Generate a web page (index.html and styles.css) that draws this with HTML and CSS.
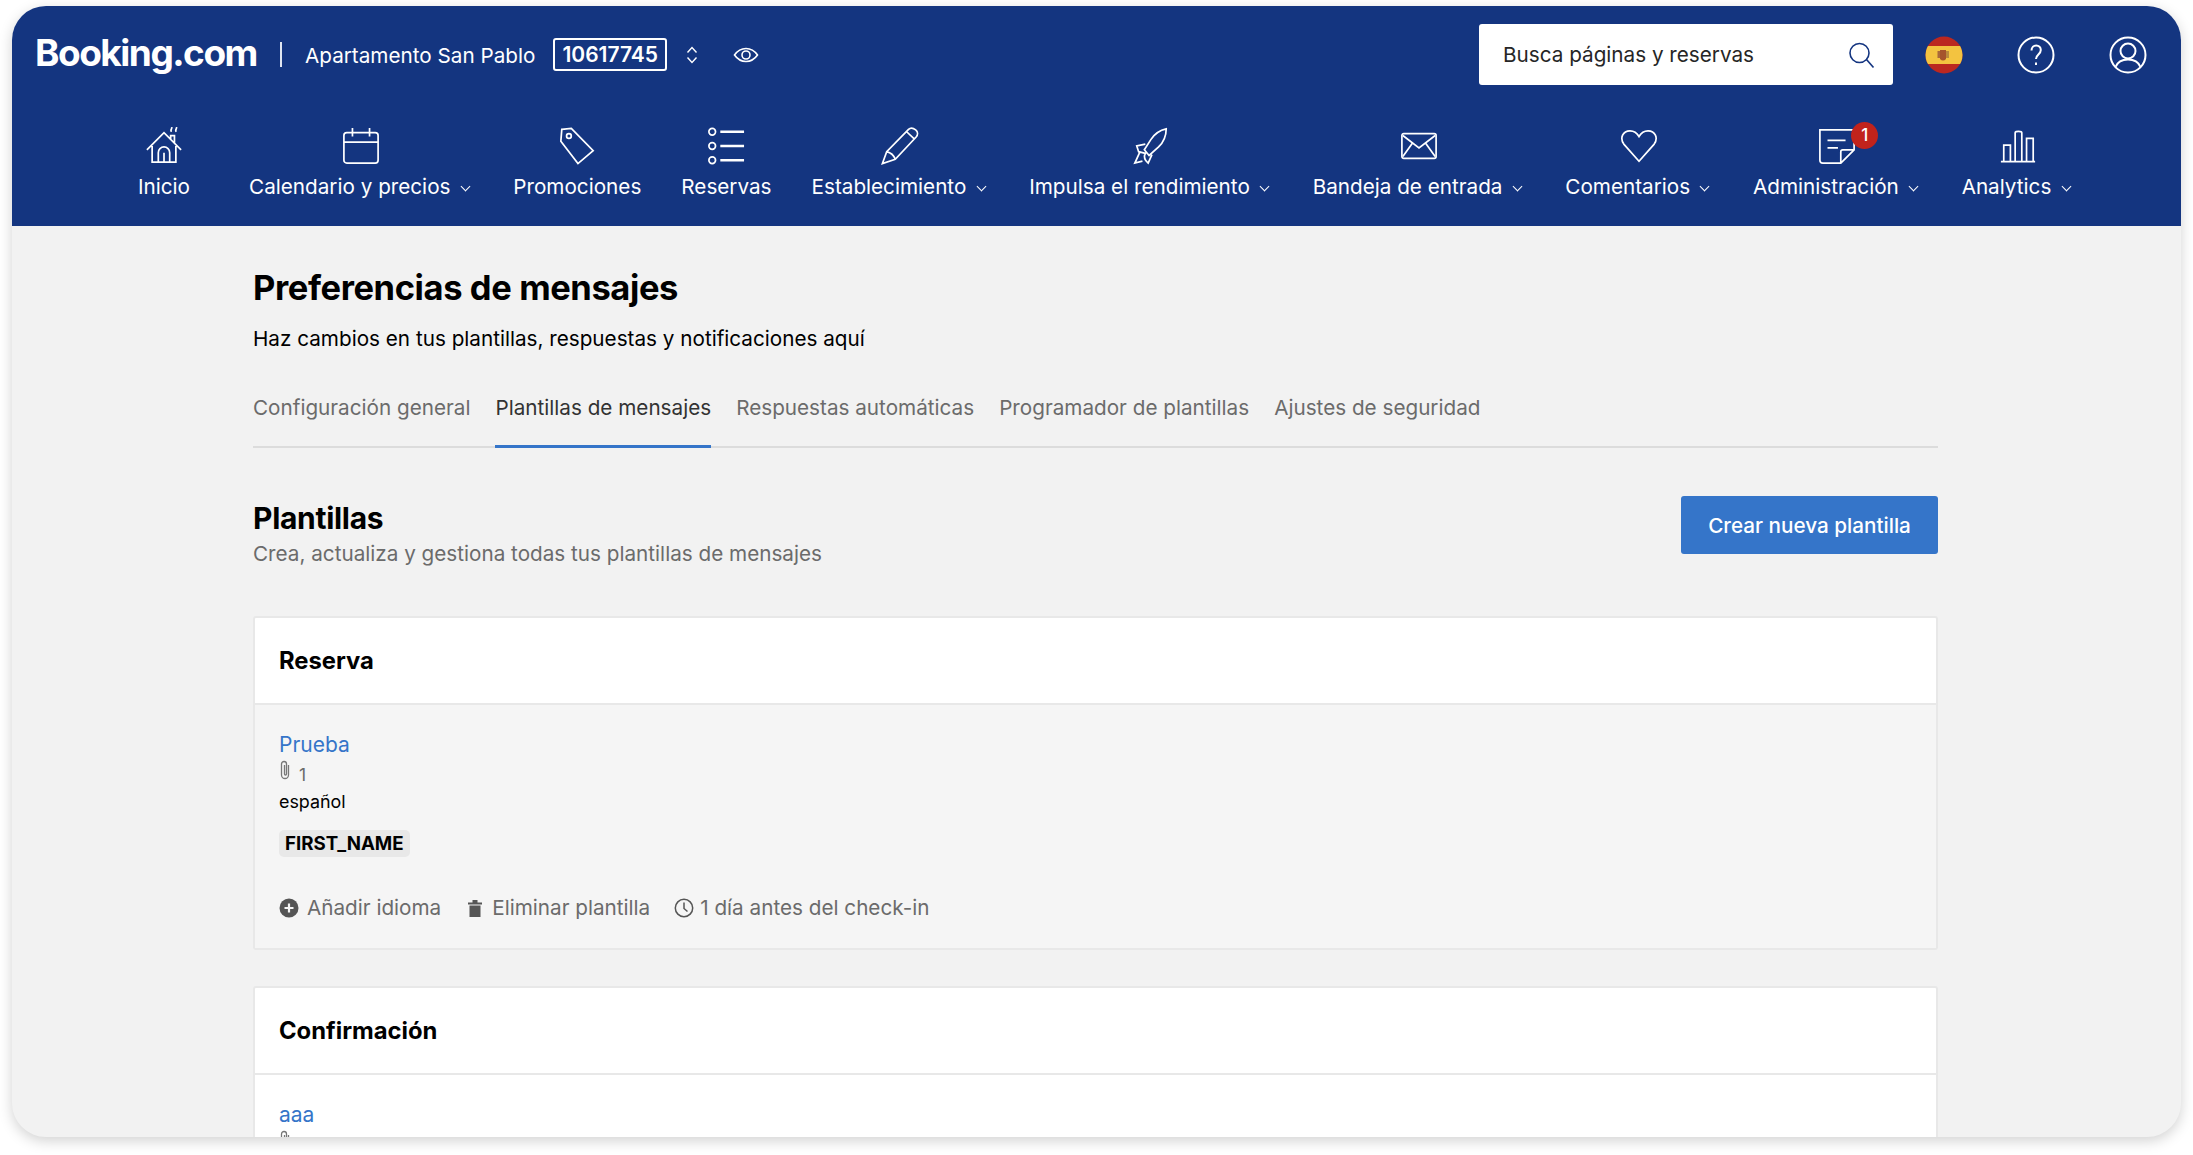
FILE: index.html
```html
<!DOCTYPE html>
<html lang="es">
<head>
    <meta charset="UTF-8">
    <meta name="viewport" content="width=device-width, initial-scale=1.0">
    <title>Preferencias de mensajes</title>
    <link rel="stylesheet" href="styles.css">
</head>
<body>
    <div class="window">
        <header class="header">
            <div class="top-row">
                <div class="brand">
                    <span class="logo">Booking.com</span>
                    <span class="brand-sep"></span>
                    <span class="hotel-name">Apartamento San Pablo</span>
                    <span class="hotel-id">10617745</span>
                    <svg class="updown" viewBox="0 0 14 20"><path d="M2.500 7.500 7 2.500l4.500 5M2.500 12.500 7 17.500l4.500-5"/></svg>
                    <svg class="eye" viewBox="0 0 26 20"><path d="M1.500 10C5 5 8.500 3.500 13 3.500S21 5 24.500 10C21 15 17.500 16.500 13 16.500S5 15 1.500 10Z"/><circle cx="13" cy="10" r="4"/></svg>
                </div>
                <div class="top-tools">
                    <div class="search">
                        <span>Busca páginas y reservas</span>
                        <svg viewBox="0 0 28 28"><circle cx="12.500" cy="12" r="9.500"/><path d="m19.500 18.500 7 8"/></svg>
                    </div>
                    <svg class="flag" viewBox="0 0 38 38">
                        <clipPath id="flag-clip"><circle cx="19" cy="19" r="18.500"/></clipPath>
                        <g clip-path="url(#flag-clip)">
                            <path d="M0 0h38v38H0z" fill="#bb2720"/>
                            <path d="M0 10h38v18H0z" fill="#f3c340"/>
                            <path d="M15 14h6v9q-3 3-6 0z" fill="#a5532c"/>
                            <path d="M21 15h3v7h-3z" fill="#b98a3c"/>
                            <path d="M12.500 15h2.500v7h-2.500z" fill="#a9683a"/>
                        </g>
                    </svg>
                    <svg class="round-icon" viewBox="0 0 38 38"><circle cx="19" cy="19" r="17.500"/><path d="M14.500 14.500c0-3 2-5 4.700-5s4.600 2 4.600 4.500c0 4.500-4.800 4.500-4.800 9"/><path d="M19 26.500v2.500"/></svg>
                    <svg class="round-icon" viewBox="0 0 38 38"><circle cx="19" cy="19" r="17.500"/><circle cx="19" cy="15" r="7.500"/><path d="M6.500 31c2-5 7-7.500 12.500-7.500S29.500 26 31.500 31"/></svg>
                </div>
            </div>
            <nav class="nav">
                <a class="nav-item home">
                    <svg viewBox="0 0 40 40"><path d="M2 24 20 6l18 18M7.500 20v17h25V20M14 37V27a6 6 0 0 1 12 0v10M20 37V27M27 13V9h4v8M28 5c-2-2 1-3 0-5M33 5c-2-2 1-3 0-5"/></svg>
                    <span>Inicio</span>
                </a>
                <a class="nav-item">
                    <svg viewBox="0 0 40 40"><rect x="2" y="6" width="36" height="32" rx="3"/><path d="M2 16h36M11 1v9M29 1v9"/></svg>
                    <span>Calendario y precios <i class="chev"></i></span>
                </a>
                <a class="nav-item">
                    <svg viewBox="0 0 40 40"><path d="M4 2.500 14 1.500 37 25 21 38.500 3 15z"/><circle cx="11.500" cy="9.500" r="2.500"/></svg>
                    <span>Promociones</span>
                </a>
                <a class="nav-item">
                    <svg viewBox="0 0 40 40"><circle cx="5.500" cy="5" r="3.500"/><circle cx="5.500" cy="20" r="3.500"/><circle cx="5.500" cy="35" r="3.500"/><path d="M14 5h25M14 20h25M14 35h25" class="thick"/></svg>
                    <span>Reservas</span>
                </a>
                <a class="nav-item">
                    <svg viewBox="0 0 40 40"><path d="M1.500 38.500 6 26 29 2.500c2-2 5-1.500 7.500.5s2.500 5 .5 7.500L15 34zM6 26c4 1 7.500 4 9 8M27 5l8 7.500"/></svg>
                    <span>Establecimiento <i class="chev"></i></span>
                </a>
                <a class="nav-item">
                    <svg viewBox="0 0 40 40"><path d="M36 2c-7 1.500-12 5-16 11L13 24l5 6 10-9c6-6 8-12 8-19zM14 18l-9 2 2 6 8 2M21 29l-4 9c-4-3-5-6-3-11M8 27l-5 11 8-2"/></svg>
                    <span>Impulsa el rendimiento <i class="chev"></i></span>
                </a>
                <a class="nav-item">
                    <svg viewBox="0 0 40 40"><rect x="2" y="7" width="36" height="26" rx="2"/><path d="m3 9 17 13L37 9M3 31l10-14M37 31 27 17"/></svg>
                    <span>Bandeja de entrada <i class="chev"></i></span>
                </a>
                <a class="nav-item">
                    <svg viewBox="0 0 40 40"><path d="M20 36 4 18C-.5 11.500 3 4 10.500 4 14.500 4 18 6.500 20 10c2-3.500 5.500-6 9.500-6C37 4 40.500 11.500 36 18z"/></svg>
                    <span>Comentarios <i class="chev"></i></span>
                </a>
                <a class="nav-item">
                    <span class="admin-icon">
                        <svg viewBox="0 0 40 40"><path d="M22 38H5c-2 0-3-1-3-3V3h34c1 0 2 1 2 2v19L24 38zM24 37V26q0-2 2-2h11M10 14h19M10 22h11"/></svg>
                        <b class="badge">1</b>
                    </span>
                    <span>Administración <i class="chev"></i></span>
                </a>
                <a class="nav-item">
                    <svg viewBox="0 0 40 40"><path d="M2 36.500h36M5 36V19h7v17M17 36V6c0-2 7-2 7 0v30M29 36V12h7v24"/></svg>
                    <span>Analytics <i class="chev"></i></span>
                </a>
            </nav>
        </header>

        <main class="content">
            <h1>Preferencias de mensajes</h1>
            <p class="intro">Haz cambios en tus plantillas, respuestas y notificaciones aquí</p>

            <div class="tabs">
                <a class="tab">Configuración general</a>
                <a class="tab active">Plantillas de mensajes</a>
                <a class="tab">Respuestas automáticas</a>
                <a class="tab">Programador de plantillas</a>
                <a class="tab">Ajustes de seguridad</a>
            </div>

            <div class="section-head">
                <div>
                    <h2>Plantillas</h2>
                    <p class="section-desc">Crea, actualiza y gestiona todas tus plantillas de mensajes</p>
                </div>
                <button class="primary">Crear nueva plantilla</button>
            </div>

            <section class="card">
                <h3 class="card-title">Reserva</h3>
                <div class="card-body shaded">
                    <a class="tpl-link">Prueba</a>
                    <div class="attach">
                        <svg viewBox="0 0 12 20"><path d="M9.500 5v10a3.500 3.500 0 0 1-7 0V4a2.500 2.500 0 0 1 5 0v10a1 1 0 0 1-2 0V5"/></svg>
                        <span>1</span>
                    </div>
                    <div class="lang">español</div>
                    <span class="tag">FIRST_NAME</span>
                    <div class="actions">
                        <span class="action">
                            <svg viewBox="0 0 20 20"><circle cx="10" cy="10" r="9.500" fill="#555"/><path d="M10 5.500v9M5.500 10h9" stroke="#f5f5f5" stroke-width="2.200"/></svg>
                            Añadir idioma
                        </span>
                        <span class="action">
                            <svg viewBox="0 0 20 20"><path d="M3 4.500h14V6.500H3zM7.500 4.500V2h5v2.500M4.500 7.500h11V19h-11z" fill="#555"/></svg>
                            Eliminar plantilla
                        </span>
                        <span class="action tight">
                            <svg viewBox="0 0 20 20"><circle cx="10" cy="10" r="8.700" fill="none" stroke="#555" stroke-width="1.500"/><path d="M10 4.500V10.500l3.500 3" fill="none" stroke="#555" stroke-width="1.500"/></svg>
                            1 día antes del check-in
                        </span>
                    </div>
                </div>
            </section>

            <section class="card">
                <h3 class="card-title">Confirmación</h3>
                <div class="card-body">
                    <a class="tpl-link">aaa</a>
                    <div class="attach">
                        <svg viewBox="0 0 12 20"><path d="M9.500 5v10a3.500 3.500 0 0 1-7 0V4a2.500 2.500 0 0 1 5 0v10a1 1 0 0 1-2 0V5"/></svg>
                        <span>1</span>
                    </div>
                </div>
            </section>
        </main>
    </div>
</body>
</html>
```

FILE: styles.css
```css
* {
    box-sizing: border-box;
}

body {
    margin: 0;
    padding: 6px 12px 0;
    height: 1155px;
    overflow: hidden;
    background-color: #fff;
    font-family: Inter, "Noto Sans", sans-serif;
    font-size: 20.7px;
    color: #000;
}

.window {
    height: 1131px;
    overflow: hidden;
    border-radius: 34px;
    background-color: #f2f2f2;
    box-shadow: 0 4px 14px rgba(0, 0, 0, 0.18);
}

/* Header */
.header {
    height: 220px;
    background-color: #143580;
    color: #fff;
}

.top-row {
    display: flex;
    justify-content: space-between;
    padding: 18px 34px 0 23px;
}

.brand {
    display: flex;
    align-items: center;
    height: 61px;
}

.logo {
    width: 222px;
    padding-bottom: 4px;
    font-size: 37px;
    font-weight: 700;
    letter-spacing: -1.5px;
}

.brand-sep {
    width: 2px;
    height: 25px;
    margin: 0 23px;
    background-color: #dfe5f1;
}

.hotel-name {
    margin-right: 18px;
    padding-top: 1px;
}

.hotel-id {
    padding: 2px 7px;
    border: 2px solid #fff;
    border-radius: 3px;
    font-size: 21px;
    font-weight: 600;
}

.updown {
    width: 14px;
    height: 20px;
    margin-left: 18px;
    fill: none;
    stroke: #fff;
    stroke-width: 1.4;
}

.eye {
    width: 26px;
    height: 20px;
    margin-left: 34px;
    fill: none;
    stroke: #fff;
    stroke-width: 1.6;
}

.top-tools {
    display: flex;
    align-items: center;
    gap: 54px;
}

.search {
    display: flex;
    align-items: center;
    justify-content: space-between;
    width: 414px;
    height: 61px;
    margin-right: -22px;
    padding: 0 18px 0 24px;
    border-radius: 3px;
    background-color: #fff;
    color: #262626;
}

.search svg {
    width: 28px;
    height: 28px;
    fill: none;
    stroke: #143580;
    stroke-width: 1.6;
}

.flag,
.round-icon {
    width: 38px;
    height: 38px;
}

.round-icon {
    fill: none;
    stroke: #fff;
    stroke-width: 2;
}

.nav {
    display: flex;
    gap: 40px;
    margin-top: 42px;
    padding-left: 126px;
}

.nav-item {
    display: flex;
    flex-direction: column;
    align-items: center;
    gap: 9px;
    white-space: nowrap;
}

.nav-item.home {
    margin-right: 19px;
}

.nav-item svg {
    display: block;
    width: 38px;
    height: 38px;
    fill: none;
    stroke: #fff;
    stroke-width: 1.8;
}

.nav-item .thick {
    stroke-width: 2.6;
}

.chev {
    display: inline-block;
    width: 7px;
    height: 7px;
    margin: 0 4.5px 4px 5.5px;
    border-right: 1.4px solid #fff;
    border-bottom: 1.4px solid #fff;
    transform: rotate(45deg);
}

.admin-icon {
    position: relative;
}

.badge {
    position: absolute;
    top: -5px;
    right: -22px;
    width: 27px;
    height: 27px;
    border-radius: 50%;
    background-color: #c1231c;
    font-size: 17px;
    font-weight: 500;
    line-height: 27px;
    text-align: center;
}

/* Contenido */
.content {
    width: 1685px;
    margin-left: 241px;
}

h1 {
    margin: 0;
    padding-top: 39px;
    font-size: 34.5px;
    font-weight: 700;
    line-height: 46px;
    letter-spacing: -0.4px;
}

.intro {
    margin: 14px 0 0;
    line-height: 27px;
}

.tabs {
    display: flex;
    gap: 25px;
    margin-top: 28px;
    border-bottom: 2px solid #dcdcdc;
}

.tab {
    height: 66px;
    padding-top: 15px;
    color: #6b6b6b;
    white-space: nowrap;
}

.tab.active {
    margin-bottom: -2px;
    height: 68px;
    border-bottom: 3px solid #3575c9;
    color: #333;
}

.section-head {
    display: flex;
    align-items: flex-start;
    justify-content: space-between;
    margin-top: 48px;
}

h2 {
    margin: 0;
    padding-top: 2px;
    font-size: 30px;
    font-weight: 700;
    line-height: 40px;
    letter-spacing: -0.3px;
}

.section-desc {
    margin: 2px 0 0;
    color: #6b6b6b;
    line-height: 27px;
}

.primary {
    width: 257px;
    height: 58px;
    border: none;
    border-radius: 3px;
    background-color: #3575c9;
    color: #fff;
    font-family: inherit;
    font-size: 20.7px;
    font-weight: 500;
}

.card {
    margin-bottom: 36px;
    border: 2px solid #e8e8e8;
    border-radius: 3px;
    background-color: #fff;
}

.section-head + .card {
    margin-top: 49px;
}

.card-title {
    margin: 0;
    padding: 1px 24px 0;
    border-bottom: 2px solid #e8e8e8;
    font-size: 23.8px;
    font-weight: 700;
    line-height: 84px;
}

.card-body {
    padding: 25px 24px 0;
}

.card-body.shaded {
    height: 243px;
    background-color: #f5f5f5;
}

.tpl-link {
    display: block;
    color: #3575c9;
    font-size: 21px;
    line-height: 30px;
}

.attach {
    display: flex;
    align-items: flex-start;
    gap: 8px;
    height: 28px;
    color: #6b6b6b;
    font-size: 17.5px;
}

.attach svg {
    width: 12px;
    height: 20px;
    fill: none;
    stroke: #777;
    stroke-width: 1.3;
}

.attach span {
    padding-top: 4px;
}

.lang {
    font-size: 17.9px;
    line-height: 28px;
}

.tag {
    display: inline-block;
    margin-top: 14px;
    padding: 0 6px;
    border-radius: 5px;
    background-color: #e8e8e8;
    font-size: 18.7px;
    font-weight: 700;
    line-height: 27px;
}

.actions {
    display: flex;
    gap: 24px;
    margin-top: 38px;
    color: #6b6b6b;
}

.action {
    display: flex;
    align-items: center;
    gap: 7px;
}

.action:first-child {
    gap: 8px;
}

.action.tight {
    gap: 6px;
}

.action svg {
    width: 20px;
    height: 20px;
}
```
